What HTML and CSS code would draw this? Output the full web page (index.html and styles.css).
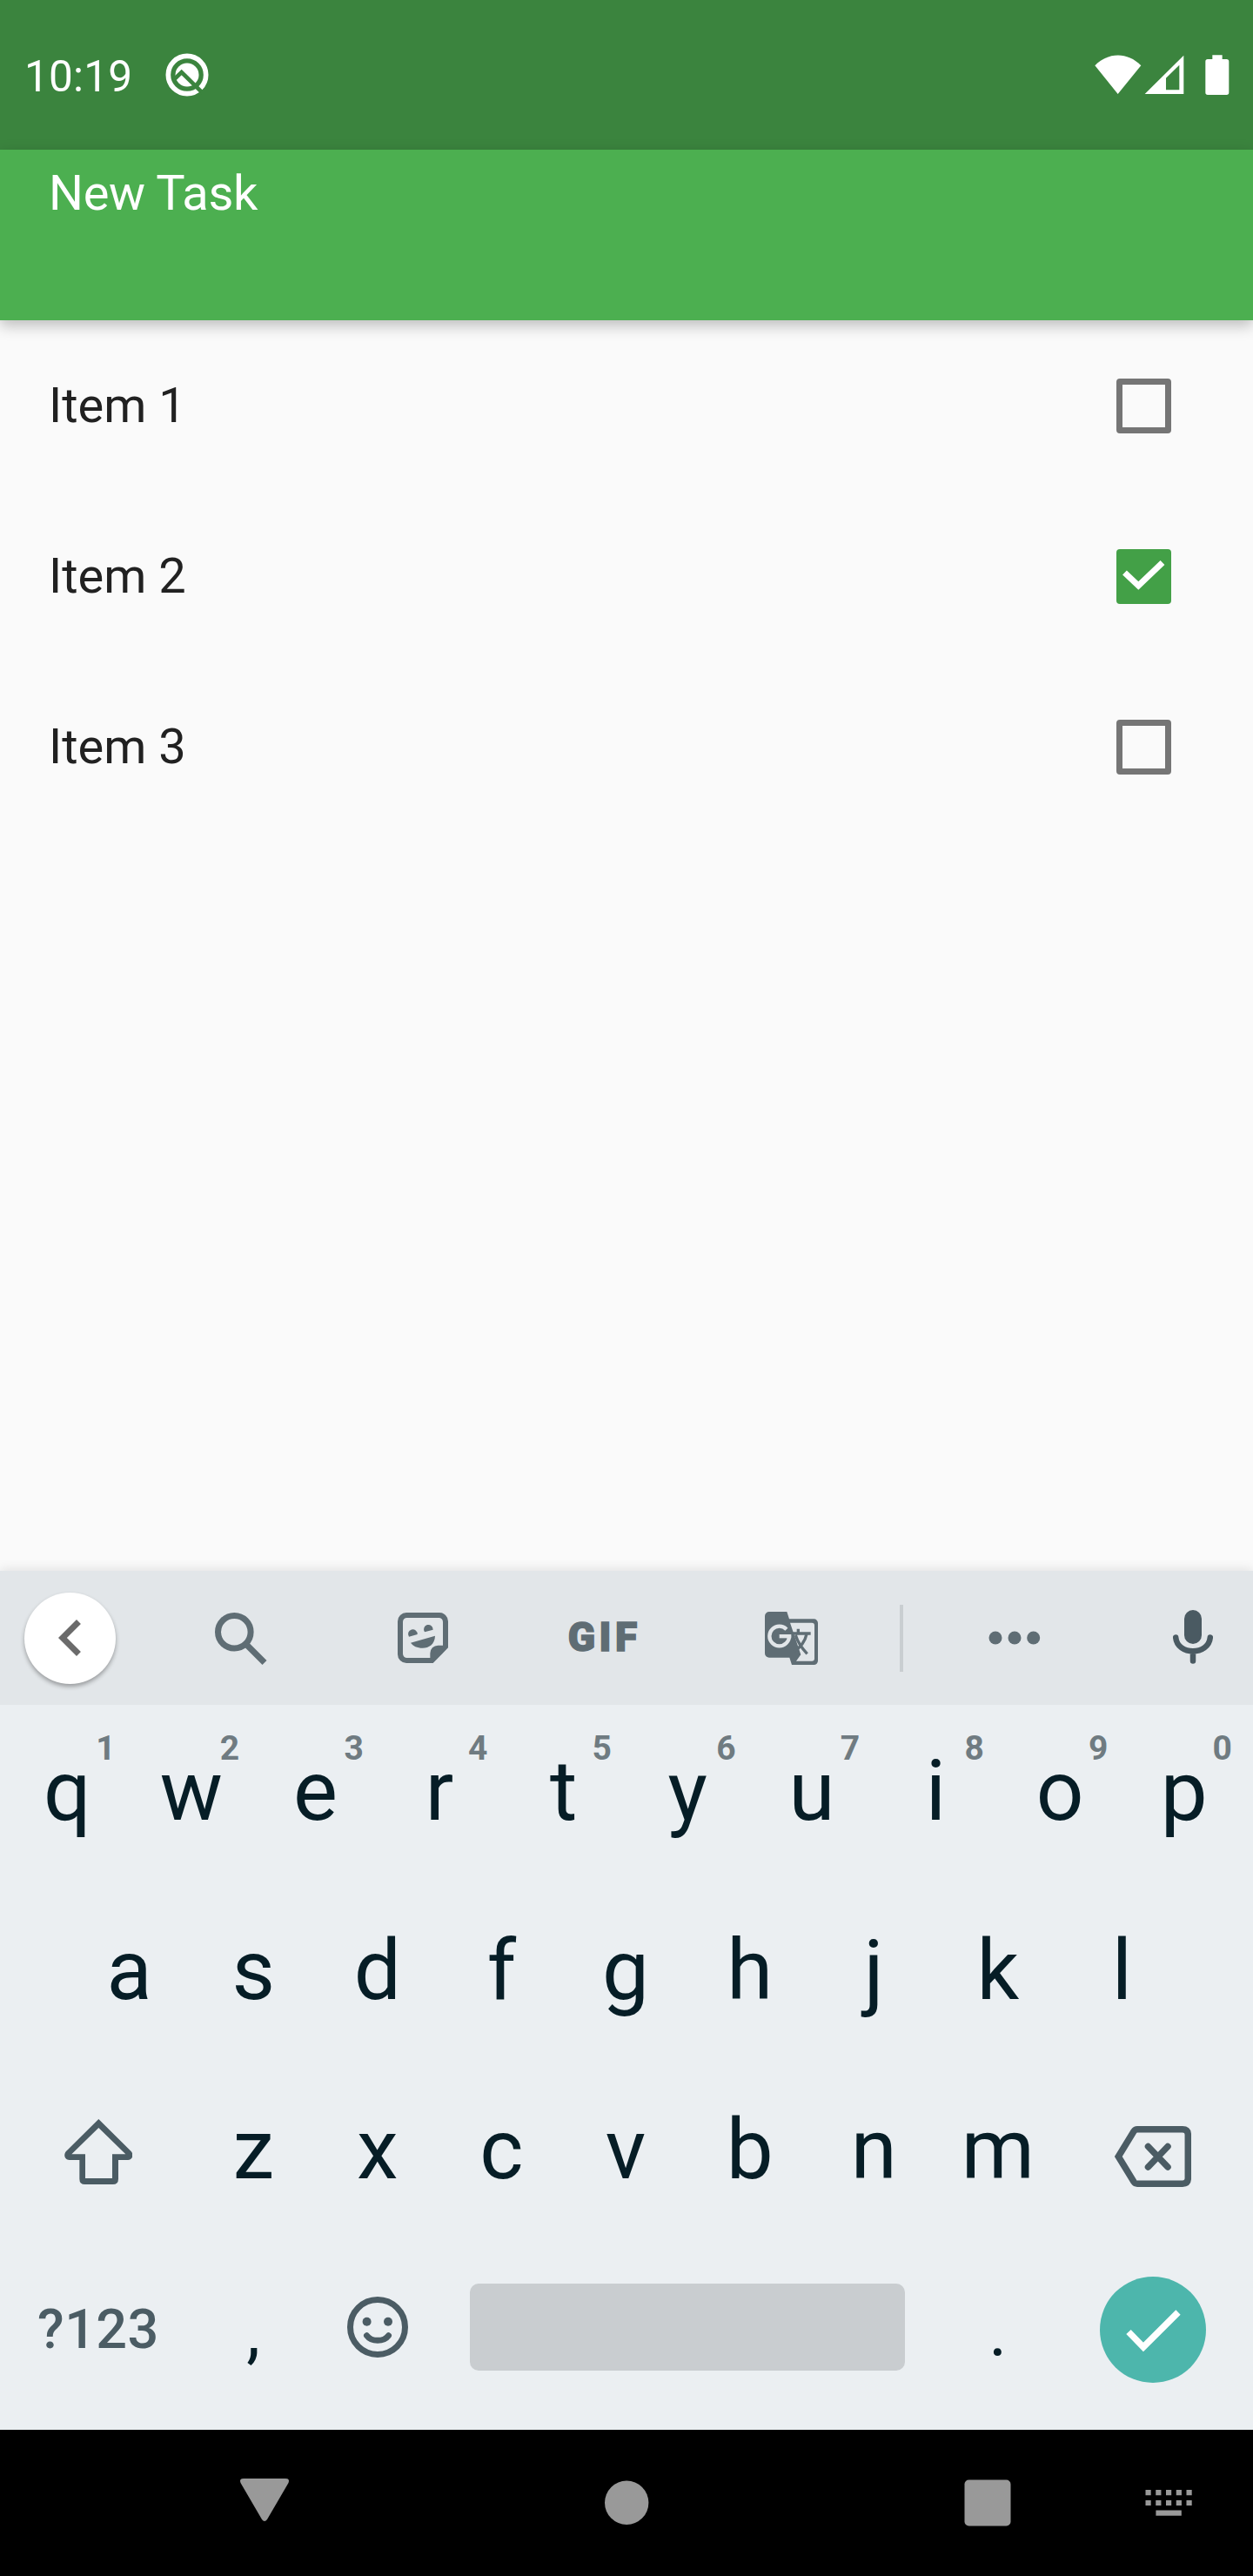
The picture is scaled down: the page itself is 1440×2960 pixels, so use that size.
FILE: index.html
```html
<!DOCTYPE html>
<html lang="en">
<head>
<meta charset="utf-8">
<title>New Task</title>
<link rel="stylesheet" href="styles.css">
</head>
<body>
<div class="screen">
  <header class="status">
    <span class="time">10:19</span>
    <svg class="q-icon" viewBox="0 0 150 150">
      <circle cx="75" cy="75" r="65" fill="none" stroke="#fff" stroke-width="17"/>
      <circle cx="75" cy="75" r="40.500" fill="#fff"/>
      <path class="q-cut" d="M28 93L56 66L128 137"/>
    </svg>
    <svg class="signals" viewBox="170 125 470 145">
      <path d="M174 165C220 118 286 117 333 165L253 263Z"/>
      <path fill-rule="evenodd" d="M346 263L480 130V263ZM419 208V249H465V163Z"/>
      <path d="M579 129H613V143H628a8 8 0 0 1 8 8V258a8 8 0 0 1-8 8H563a8 8 0 0 1-8-8V151a8 8 0 0 1 8-8H579Z"/>
    </svg>
  </header>
  <div class="appbar"><h1>New Task</h1></div>
  <main class="list">
    <label class="item"><span>Item 1</span><i class="box"></i></label>
    <label class="item"><span>Item 2</span><i class="box checked"><svg viewBox="0 0 63 63"><path d="M9.500 27L25.300 42L53 15.500"/></svg></i></label>
    <label class="item"><span>Item 3</span><i class="box"></i></label>
  </main>
  <section class="keyboard">
    <div class="tools">
      <span class="back"><svg viewBox="0 0 24 24"><path d="M15.410 7.410L14 6l-6 6 6 6 1.410-1.410L10.830 12z"/></svg></span>
      <svg class="search" viewBox="0 0 60 60"><circle cx="22.300" cy="22.300" r="18.800"/><path d="M35.500 36L57 57.500"/></svg>
      <svg class="sticker" viewBox="50 67 174 174">
        <path fill-rule="evenodd" d="M80 67H194a30 30 0 0 1 30 30V188L172 241H80a30 30 0 0 1-30-30V97a30 30 0 0 1 30-30ZM82 85a14 14 0 0 0-14 14V209a14 14 0 0 0 14 14H162V207a27 27 0 0 1 27-27H206V99a14 14 0 0 0-14-14Z"/>
        <path d="M89 150a16 16 0 1 1 29-8ZM143 134a16 16 0 1 1 29-8ZM95 171L179 147C178 176 158 189 136 189C117 189 103 182 95 171Z"/>
      </svg>
      <span class="gif">GIF</span>
      <svg class="translate" viewBox="57 69 183 183">
        <path fill-rule="evenodd" d="M72 69H133L141 94H226a14 14 0 0 1 14 14V238a14 14 0 0 1-14 14H150L142 227H72a15 15 0 0 1-15-15V84a15 15 0 0 1 15-15ZM144 107L181 217L165 239H219a9 9 0 0 0 9-9V116a9 9 0 0 0-9-9Z"/>
        <path class="han" d="M148 144H215M172 128V146M201 146C196 170 180 191 158 206M163 150C171 176 186 196 203 214"/>
        <circle class="ring" cx="107" cy="153" r="34" pathLength="360" stroke-dasharray="315 45"/>
        <rect class="bar" x="107" y="147" width="41" height="13"/>
      </svg>
      <span class="divider"></span>
      <svg class="dots" viewBox="0 0 60 16"><circle cx="8" cy="8" r="7.500"/><circle cx="30" cy="8" r="7.500"/><circle cx="51.700" cy="8" r="7.500"/></svg>
      <svg class="mic" viewBox="0 0 46 62"><rect x="13" y="0" width="20" height="39" rx="10"/><path d="M3.200 31.500C5 52.500 41 52.500 42.800 31.500M23 49V58.500"/></svg>
    </div>
    <div class="row">
      <span class="key">q<sup>1</sup></span><span class="key">w<sup>2</sup></span><span class="key">e<sup>3</sup></span><span class="key">r<sup>4</sup></span><span class="key">t<sup>5</sup></span><span class="key">y<sup>6</sup></span><span class="key">u<sup>7</sup></span><span class="key">i<sup>8</sup></span><span class="key">o<sup>9</sup></span><span class="key">p<sup>0</sup></span>
    </div>
    <div class="row">
      <span class="key offset">a</span><span class="key">s</span><span class="key">d</span><span class="key">f</span><span class="key">g</span><span class="key">h</span><span class="key">j</span><span class="key">k</span><span class="key">l</span>
    </div>
    <div class="row">
      <span class="key wide"><svg class="shift" viewBox="101 76 236 226"><path fill-rule="evenodd" d="M219 76L331 187C342 200 335 217 320 217H287V282q0 19-19 19H172q-19 0-19-19V217H118C103 217 96 200 107 187ZM219 106L126 197H173V280H266V197H312Z"/></svg></span>
      <span class="key">z</span><span class="key">x</span><span class="key">c</span><span class="key">v</span><span class="key">b</span><span class="key">n</span><span class="key">m</span>
      <span class="key wide"><svg class="erase" viewBox="0 0 88 70"><path d="M4.300 35L22 6Q23.500 3.800 26 3.800H78Q84.300 3.800 84.300 10V60Q84.300 66.200 78 66.200H26Q23.500 66.200 22 64Z"/><path class="cross" d="M38.500 23.500L61 47M61 23.500L38.500 47"/></svg></span>
    </div>
    <div class="row last">
      <span class="key wide mode">?123</span>
      <span class="key punct">,</span>
      <span class="key"><svg class="emoji" viewBox="0 0 70 70"><circle class="face" cx="35" cy="35" r="31.500"/><circle cx="22.600" cy="28.700" r="5"/><circle cx="47" cy="28.700" r="5"/><path d="M22.500 44.700C28 52.200 42 52.200 47.500 44.700"/></svg></span>
      <span class="key space"><i></i></span>
      <span class="key punct">.</span>
      <span class="key wide"><span class="enter"><svg viewBox="0 0 122 122"><path d="M33 63.500L50 81L90 41"/></svg></span></span>
    </div>
  </section>
  <nav class="nav">
    <svg viewBox="0 0 1440 168">
      <path d="M280 56H328Q333.500 56 331.500 61L307 103Q304 107 301 103L276.500 61Q274.500 56 280 56Z"/>
      <circle cx="720.200" cy="83.800" r="25.200"/>
      <rect x="1108.500" y="57.500" width="53" height="53" rx="5"/>
      <path class="keys" d="M1316.500 72.200H1370M1316.500 84H1370"/>
      <rect x="1328.400" y="92.500" width="29.400" height="6.200"/>
    </svg>
  </nav>
</div>
</body>
</html>
```
FILE: styles.css
```css
* { box-sizing: border-box; }
body { margin: 0; font-family: Roboto, sans-serif; background: #fafafa; }
svg { display: block; flex: none; }

.screen { width: 1440px; height: 2960px; display: flex; flex-direction: column; overflow: hidden; }

.status { height: 172px; flex: none; display: flex; align-items: flex-start; padding: 0 28px; background: #3b843e; color: #fff; }
.time { font-size: 49.500px; line-height: 60px; margin-top: 58px; width: 162px; letter-spacing: .2px; }
.q-icon { width: 50px; height: 50px; margin-top: 61px; }
.q-cut { fill: none; stroke: #3b843e; stroke-width: 14; }
.signals { width: 156.670px; height: 48.330px; margin: 61.670px -1.330px 0 auto; fill: #fff; }

.appbar { height: 196px; flex: none; padding-left: 56px; background: #4caf50; box-shadow: 0 6px 16px rgba(0, 0, 0, .25); position: relative; }
.appbar h1 { margin: 0; font-size: 56px; font-weight: 400; line-height: 100px; letter-spacing: -.3px; color: #fff; }

.list { flex: 1; background: #fafafa; }
.item { height: 196px; display: flex; align-items: center; justify-content: space-between; padding: 0 94.500px 0 56px; font-size: 56px; color: #212121; }
.box { width: 63px; height: 63px; border: 7px solid #757575; border-radius: 4px; }
.box.checked { border: 0; background: #43a047; }
.box path { fill: none; stroke: #fff; stroke-width: 7; }

.keyboard { height: 987px; flex: none; background: #ebeff2; color: #061d26; box-shadow: 0 -2px 12px rgba(0, 0, 0, .1); }
.tools { height: 154px; display: flex; align-items: center; padding-left: 28px; background: #e2e6e9; fill: #5f6d74; }
.back { width: 105px; height: 105px; display: flex; align-items: center; justify-content: center; border-radius: 50%; background: #fff; box-shadow: 0 3px 5px rgba(0, 0, 0, .32); }
.back svg { width: 84px; height: 84px; fill: #6b6b6b; }
.search { width: 60px; height: 60px; margin: 2px 0 0 113.500px; fill: none; stroke: #5f6d74; stroke-width: 7; }
.sticker { width: 58px; height: 58px; margin-left: 150.200px; }
.gif { width: 84px; margin: -2px 0 0 138px; font-size: 46px; font-weight: 900; line-height: 60px; letter-spacing: 4.500px; -webkit-text-stroke: 1.500px #5f6d74; color: #5f6d74; }
.translate { width: 61px; height: 61px; margin: 1px 0 0 142.300px; }
.han { fill: none; stroke: #5f6d74; stroke-width: 10; }
.ring { fill: none; stroke: #e2e6e9; stroke-width: 13; }
.bar { fill: #e2e6e9; }
.divider { width: 4px; height: 77px; margin-left: 94px; background: #c9ced1; }
.dots { width: 60px; height: 16px; margin-left: 98px; }
.mic { width: 46px; height: 62px; margin-left: 152px; margin-top: -2px; fill: #4a5a62; }
.mic path { fill: none; stroke: #4a5a62; stroke-width: 6.500; stroke-linecap: round; }

.row { height: 206px; display: grid; grid-template-columns: repeat(20, 1fr); padding: 0 8px 0 6px; }
.key { grid-column: span 2; position: relative; display: flex; align-items: center; justify-content: center; padding-bottom: 8px; font-size: 96px; line-height: 1; }
.key.offset { grid-column: 2 / span 2; }
.key.wide { grid-column: span 3; }
.key.space { grid-column: span 8; }
.key sup { position: absolute; top: 30px; right: 16px; font-size: 39px; font-weight: 700; line-height: 40px; color: #6f7b81; }
.row.last .key { padding-bottom: 12px; }
.row.last .punct { padding-bottom: 1px; font-size: 80px; }
.shift { width: 78.670px; height: 75.330px; margin-top: 5px; fill: #4b5c64; }
.erase { width: 88px; height: 70px; margin-top: 15px; fill: none; stroke: #4b5c64; stroke-width: 7.500; }
.cross { stroke-linecap: round; }
.row.last .mode { padding-bottom: 7px; font-size: 63px; font-weight: 500; letter-spacing: .4px; color: #4b5c64; }
.emoji { width: 70px; height: 70px; fill: #4b5c64; }
.emoji path, .emoji .face { fill: none; stroke: #4b5c64; stroke-width: 7; stroke-linecap: round; }
.space i { width: 500px; height: 100px; border-radius: 10px; background: #c9cdd0; }
.enter { width: 122px; height: 122px; margin-top: 5px; border-radius: 50%; background: #4db6ac; }
.enter path { fill: none; stroke: #fff; stroke-width: 7.500; }

.nav { height: 168px; flex: none; background: #000; fill: #999; }
.keys { stroke: #999; stroke-width: 6.200; stroke-dasharray: 6.200 5.550; }
```
